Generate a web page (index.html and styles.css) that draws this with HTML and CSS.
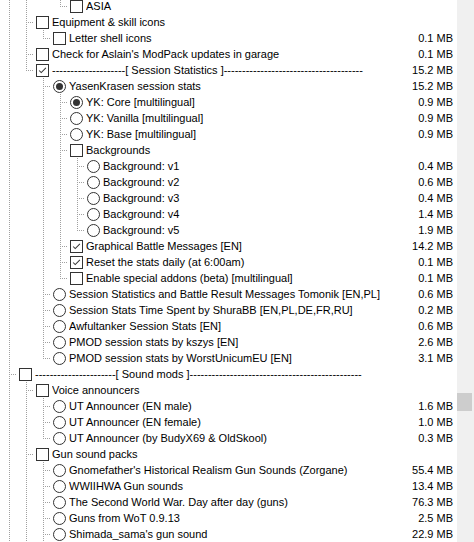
FILE: index.html
```html
<!DOCTYPE html>
<html>
<head>
<meta charset="utf-8">
<link rel="stylesheet" href="styles.css">
</head>
<body>
<div class="window">
  <div class="tree">
    <div class="rows">
      <div class="row"><span class="g p"></span><span class="g p"></span><span class="g b"></span><span class="g e"></span><span class="cb"></span><span class="lbl">ASIA</span><span class="sz"></span></div>
      <div class="row"><span class="g p"></span><span class="g t"></span><span class="cb"></span><span class="lbl">Equipment &amp; skill icons</span><span class="sz"></span></div>
      <div class="row"><span class="g p"></span><span class="g p"></span><span class="g e"></span><span class="cb"></span><span class="lbl">Letter shell icons</span><span class="sz">0.1 MB</span></div>
      <div class="row"><span class="g p"></span><span class="g t"></span><span class="cb"></span><span class="lbl">Check for Aslain's ModPack updates in garage</span><span class="sz">0.1 MB</span></div>
      <div class="row"><span class="g p"></span><span class="g e"></span><span class="cb on"><svg viewBox="0 0 13 13"><polyline points="2.5,6.5 5,9 10.5,3.5"/></svg></span><span class="lbl">--------------------[ Session Statistics ]--------------------------------------</span><span class="sz">15.2 MB</span></div>
      <div class="row"><span class="g p"></span><span class="g b"></span><span class="g t"></span><span class="rb on"></span><span class="lbl">YasenKrasen session stats</span><span class="sz">15.2 MB</span></div>
      <div class="row"><span class="g p"></span><span class="g b"></span><span class="g p"></span><span class="g t"></span><span class="rb on"></span><span class="lbl">YK: Core [multilingual]</span><span class="sz">0.9 MB</span></div>
      <div class="row"><span class="g p"></span><span class="g b"></span><span class="g p"></span><span class="g t"></span><span class="rb"></span><span class="lbl">YK: Vanilla [multilingual]</span><span class="sz">0.9 MB</span></div>
      <div class="row"><span class="g p"></span><span class="g b"></span><span class="g p"></span><span class="g t"></span><span class="rb"></span><span class="lbl">YK: Base [multilingual]</span><span class="sz">0.9 MB</span></div>
      <div class="row"><span class="g p"></span><span class="g b"></span><span class="g p"></span><span class="g t"></span><span class="cb"></span><span class="lbl">Backgrounds</span><span class="sz"></span></div>
      <div class="row"><span class="g p"></span><span class="g b"></span><span class="g p"></span><span class="g p"></span><span class="g t"></span><span class="rb"></span><span class="lbl">Background: v1</span><span class="sz">0.4 MB</span></div>
      <div class="row"><span class="g p"></span><span class="g b"></span><span class="g p"></span><span class="g p"></span><span class="g t"></span><span class="rb"></span><span class="lbl">Background: v2</span><span class="sz">0.6 MB</span></div>
      <div class="row"><span class="g p"></span><span class="g b"></span><span class="g p"></span><span class="g p"></span><span class="g t"></span><span class="rb"></span><span class="lbl">Background: v3</span><span class="sz">0.4 MB</span></div>
      <div class="row"><span class="g p"></span><span class="g b"></span><span class="g p"></span><span class="g p"></span><span class="g t"></span><span class="rb"></span><span class="lbl">Background: v4</span><span class="sz">1.4 MB</span></div>
      <div class="row"><span class="g p"></span><span class="g b"></span><span class="g p"></span><span class="g p"></span><span class="g e"></span><span class="rb"></span><span class="lbl">Background: v5</span><span class="sz">1.9 MB</span></div>
      <div class="row"><span class="g p"></span><span class="g b"></span><span class="g p"></span><span class="g t"></span><span class="cb on"><svg viewBox="0 0 13 13"><polyline points="2.5,6.5 5,9 10.5,3.5"/></svg></span><span class="lbl">Graphical Battle Messages [EN]</span><span class="sz">14.2 MB</span></div>
      <div class="row"><span class="g p"></span><span class="g b"></span><span class="g p"></span><span class="g t"></span><span class="cb on"><svg viewBox="0 0 13 13"><polyline points="2.5,6.5 5,9 10.5,3.5"/></svg></span><span class="lbl">Reset the stats daily (at 6:00am)</span><span class="sz">0.1 MB</span></div>
      <div class="row"><span class="g p"></span><span class="g b"></span><span class="g p"></span><span class="g e"></span><span class="cb"></span><span class="lbl">Enable special addons (beta) [multilingual]</span><span class="sz">0.1 MB</span></div>
      <div class="row"><span class="g p"></span><span class="g b"></span><span class="g t"></span><span class="rb"></span><span class="lbl">Session Statistics and Battle Result Messages Tomonik [EN,PL]</span><span class="sz">0.6 MB</span></div>
      <div class="row"><span class="g p"></span><span class="g b"></span><span class="g t"></span><span class="rb"></span><span class="lbl">Session Stats Time Spent by ShuraBB [EN,PL,DE,FR,RU]</span><span class="sz">0.2 MB</span></div>
      <div class="row"><span class="g p"></span><span class="g b"></span><span class="g t"></span><span class="rb"></span><span class="lbl">Awfultanker Session Stats [EN]</span><span class="sz">0.6 MB</span></div>
      <div class="row"><span class="g p"></span><span class="g b"></span><span class="g t"></span><span class="rb"></span><span class="lbl">PMOD session stats by kszys [EN]</span><span class="sz">2.6 MB</span></div>
      <div class="row"><span class="g p"></span><span class="g b"></span><span class="g e"></span><span class="rb"></span><span class="lbl">PMOD session stats by WorstUnicumEU [EN]</span><span class="sz">3.1 MB</span></div>
      <div class="row"><span class="g t"></span><span class="cb"></span><span class="lbl">----------------------[ Sound mods ]-----------------------------------------------</span><span class="sz"></span></div>
      <div class="row"><span class="g p"></span><span class="g t"></span><span class="cb"></span><span class="lbl">Voice announcers</span><span class="sz"></span></div>
      <div class="row"><span class="g p"></span><span class="g p"></span><span class="g t"></span><span class="rb"></span><span class="lbl">UT Announcer (EN male)</span><span class="sz">1.6 MB</span></div>
      <div class="row"><span class="g p"></span><span class="g p"></span><span class="g t"></span><span class="rb"></span><span class="lbl">UT Announcer (EN female)</span><span class="sz">1.0 MB</span></div>
      <div class="row"><span class="g p"></span><span class="g p"></span><span class="g e"></span><span class="rb"></span><span class="lbl">UT Announcer (by BudyX69 &amp; OldSkool)</span><span class="sz">0.3 MB</span></div>
      <div class="row"><span class="g p"></span><span class="g t"></span><span class="cb"></span><span class="lbl">Gun sound packs</span><span class="sz"></span></div>
      <div class="row"><span class="g p"></span><span class="g p"></span><span class="g t"></span><span class="rb"></span><span class="lbl">Gnomefather's Historical Realism Gun Sounds (Zorgane)</span><span class="sz">55.4 MB</span></div>
      <div class="row"><span class="g p"></span><span class="g p"></span><span class="g t"></span><span class="rb"></span><span class="lbl">WWIIHWA Gun sounds</span><span class="sz">13.4 MB</span></div>
      <div class="row"><span class="g p"></span><span class="g p"></span><span class="g t"></span><span class="rb"></span><span class="lbl">The Second World War. Day after day (guns)</span><span class="sz">76.3 MB</span></div>
      <div class="row"><span class="g p"></span><span class="g p"></span><span class="g t"></span><span class="rb"></span><span class="lbl">Guns from WoT 0.9.13</span><span class="sz">2.5 MB</span></div>
      <div class="row"><span class="g p"></span><span class="g p"></span><span class="g t"></span><span class="rb"></span><span class="lbl">Shimada_sama's gun sound</span><span class="sz">22.9 MB</span></div>
    </div>
  </div>
  <div class="scrollbar"><div class="thumb"></div></div>
</div>
</body>
</html>
```

FILE: styles.css
```css
html, body {
  margin: 0;
  padding: 0;
  background: #ffffff;
}
.window {
  width: 474px;
  height: 542px;
  display: flex;
  overflow: hidden;
  font-family: "Liberation Sans", Arial, sans-serif;
  font-size: 11px;
  color: #000;
}
.tree {
  width: 457px;
  height: 542px;
  overflow: hidden;
  background: #fff;
}
.rows {
  margin-top: -2px;
  display: flex;
  flex-direction: column;
}
.row {
  height: 16px;
  display: flex;
  align-items: center;
  padding-right: 4px;
  white-space: nowrap;
}
.g {
  flex: none;
  width: 17px;
  height: 16px;
  background-repeat: no-repeat;
}
.g.p {
  background-image: repeating-linear-gradient(to bottom, #a0a0a0 0 1px, transparent 1px 2px);
  background-size: 1px 16px;
  background-position: 9px 0;
}
.g.t {
  background-image:
    repeating-linear-gradient(to bottom, #a0a0a0 0 1px, transparent 1px 2px),
    repeating-linear-gradient(to right, #a0a0a0 0 1px, transparent 1px 2px);
  background-size: 1px 16px, 8px 1px;
  background-position: 9px 0, 9px 8px;
}
.g.e {
  background-image:
    repeating-linear-gradient(to bottom, #a0a0a0 0 1px, transparent 1px 2px),
    repeating-linear-gradient(to right, #a0a0a0 0 1px, transparent 1px 2px);
  background-size: 1px 9px, 8px 1px;
  background-position: 9px 0, 9px 8px;
}
.cb, .rb {
  flex: none;
  box-sizing: border-box;
  width: 13px;
  height: 13px;
  margin-left: 2px;
  border: 1px solid #333333;
  background: #fff;
  display: flex;
  align-items: center;
  justify-content: center;
}
.cb svg {
  width: 11px;
  height: 11px;
  display: block;
}
.cb svg polyline {
  fill: none;
  stroke: #333333;
  stroke-width: 1.2;
}
.rb {
  border-radius: 50%;
}
.rb.on::after {
  content: "";
  width: 7px;
  height: 7px;
  border-radius: 50%;
  background: #333333;
}
.lbl {
  flex: 1;
  margin-left: 3px;
  line-height: 16px;
  overflow: hidden;
}
.sz {
  flex: none;
  text-align: right;
  line-height: 16px;
  padding-left: 6px;
}
.scrollbar {
  width: 17px;
  height: 542px;
  background: #f0f0f0;
  flex: none;
  display: flex;
  flex-direction: column;
}
.thumb {
  margin-top: 393px;
  margin-left: 0;
  width: 15px;
  height: 18px;
  background: #cdcdcd;
}
```
